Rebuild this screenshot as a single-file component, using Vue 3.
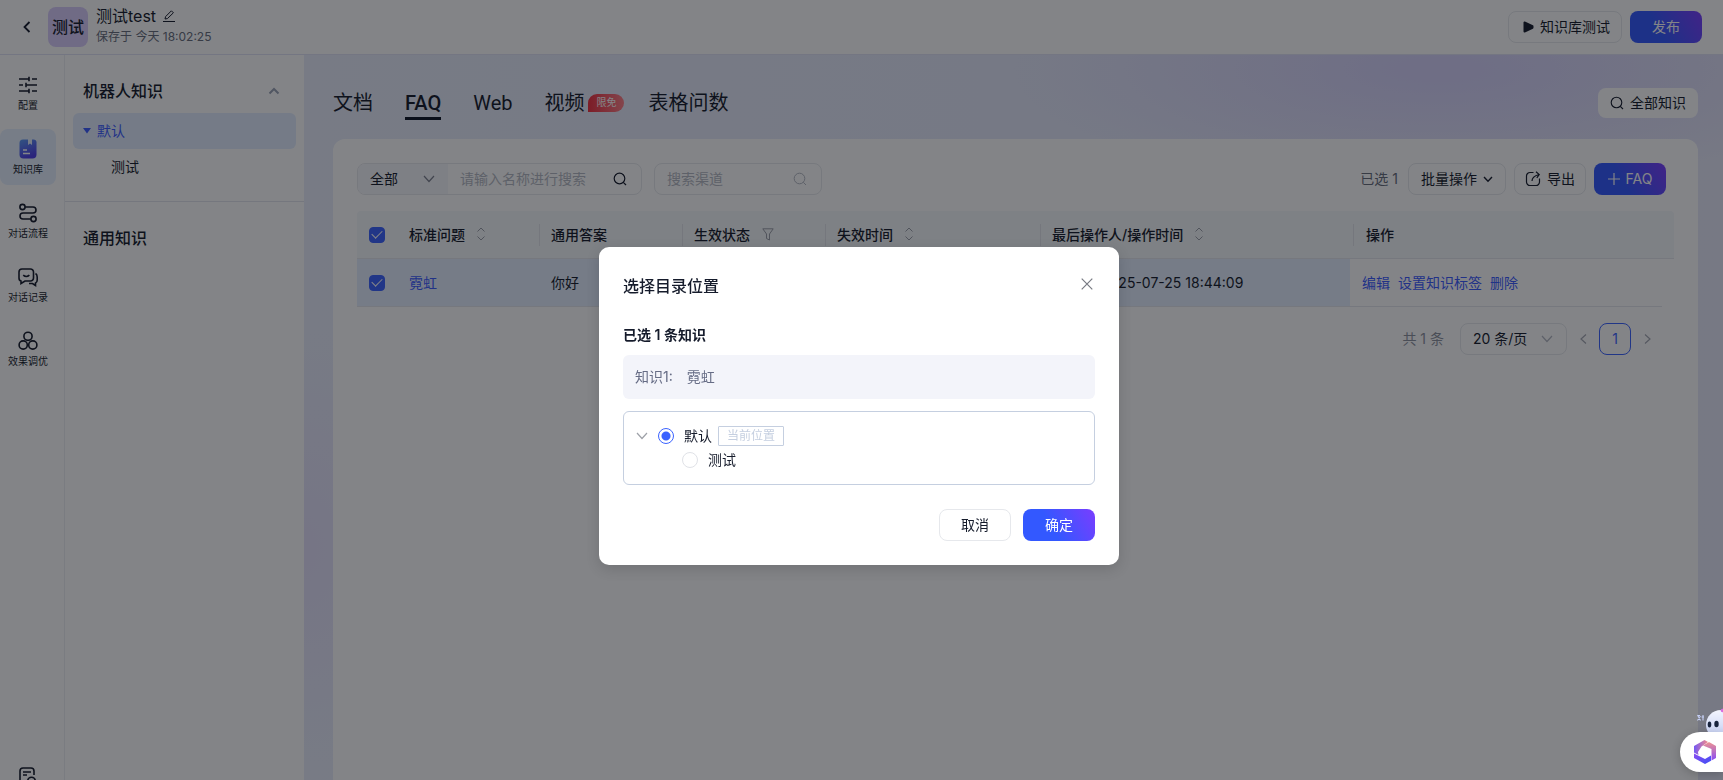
<script setup>
import { ref } from 'vue'

const navItems = [
  { id: 'config', label: '配置' },
  { id: 'library', label: '知识库' },
  { id: 'flow', label: '对话流程' },
  { id: 'chat', label: '对话记录' },
  { id: 'tune', label: '效果调优' },
]
const tabs = [
  { name: '文档' },
  { name: 'FAQ' },
  { name: 'Web' },
  { name: '视频', badge: '限免' },
  { name: '表格问数' },
]
const activeTab = ref('FAQ')
const allChecked = ref(true)
const rowChecked = ref(true)
const target = ref('default')
const keyword = ref('')
const channel = ref('')
</script>

<template>
  <div class="app">
    <header class="topbar">
      <button class="plain back" aria-label="返回">
        <svg width="8" height="12" viewBox="0 0 8 12"><path d="M6.5 1 L1.5 6 L6.5 11" fill="none" stroke="currentColor" stroke-width="1.8" /></svg>
      </button>
      <div class="avatar">测试</div>
      <div class="bot">
        <div class="bot-name">
          <span>测试test</span>
          <button class="plain" aria-label="编辑名称">
            <svg width="12" height="12" viewBox="0 0 12 12" fill="none" stroke="currentColor"><path d="M2 9 L2.6 6.6 L8.4 .8 L10.4 2.8 L4.4 8.6 Z M0 11.5 H12" /></svg>
          </button>
        </div>
        <div class="bot-saved">保存于 今天 18:02:25</div>
      </div>
      <div class="top-actions">
        <button class="btn test-btn">
          <svg width="11" height="12" viewBox="0 0 11 12"><path d="M1.5 1.5 V10.5 L9.5 6.8 V5.2 Z" fill="currentColor" stroke="currentColor" stroke-width="2" stroke-linejoin="round" /></svg>
          知识库测试
        </button>
        <button class="btn primary publish">发布</button>
      </div>
    </header>

    <div class="body">
      <nav class="rail">
        <a v-for="item in navItems" :key="item.id" href="#" class="rail-item" :class="{ active: item.id === 'library' }">
          <svg width="20" height="20" viewBox="0 0 20 20" fill="none" stroke="currentColor" stroke-width="1.6">
            <path v-if="item.id === 'config'" d="M1 4 H11 M14 4 H19 M11 1.8 V6.2 M1 10 H5 M8 10 H19 M8 7.8 V12.2 M1 16 H11 M14 16 H19 M11 13.8 V18.2" />
            <g v-else-if="item.id === 'library'" stroke="none">
              <defs>
                <linearGradient id="bookFill" x1="0" y1="0" x2="0.4" y2="1">
                  <stop offset="0" stop-color="#5c9df5" />
                  <stop offset="1" stop-color="#4f3fe8" />
                </linearGradient>
              </defs>
              <path d="M5 .5 H10 V6 L12 4.6 L14 6 V.5 H15 A3 3 0 0 1 18.500 4 V15.500 A4 4 0 0 1 14.500 19.500 H5.500 A4 4 0 0 1 1.500 15.500 V4 A3.500 3.500 0 0 1 5 .5Z" fill="url(#bookFill)" />
              <path d="M5 11 H9 M5 14.500 H12" stroke="#fff" stroke-width="1.500" />
            </g>
            <g v-else-if="item.id === 'flow'">
              <circle cx="4.500" cy="4" r="2.600" /><circle cx="15.500" cy="16" r="2.600" />
              <path d="M7.200 4 H15 A3 3 0 0 1 15 10 H5 A3 3 0 0 0 5 16 H12.800" />
            </g>
            <g v-else-if="item.id === 'chat'">
              <path d="M4 2 H12.500 A3 3 0 0 1 15.500 5 V11 A3 3 0 0 1 12.500 14 H7 L3 16.500 V14 A3 3 0 0 1 1 11 V5 A3 3 0 0 1 4 2Z" />
              <path d="M5.200 8.200 Q8.300 10.800 11.400 8.200 M17.500 6.500 Q19.200 7.500 19.200 10 V13 Q19.200 15.500 17.500 16 V18.500 L14.500 16.500 H11" />
            </g>
            <g v-else>
              <circle cx="10" cy="5.300" r="4.100" /><circle cx="5.200" cy="14" r="4.100" /><circle cx="14.800" cy="14" r="4.100" />
            </g>
          </svg>
          <span>{{ item.label }}</span>
        </a>
        <a href="#" class="rail-item rail-last" aria-label="日志">
          <svg width="20" height="20" viewBox="0 0 20 20" fill="none" stroke="currentColor" stroke-width="1.600">
            <path d="M8 18 H5 A3 3 0 0 1 2 15 V4 A3 3 0 0 1 5 1 H13 A3 3 0 0 1 16 4 V8 M5 5 H13 M5 8 H9" /><circle cx="13.500" cy="14" r="3.800" />
          </svg>
        </a>
      </nav>

      <aside class="tree">
        <section class="tree-group">
          <h2 class="tree-title">
            机器人知识
            <button class="plain" aria-label="收起">
              <svg width="12" height="8" viewBox="0 0 12 8"><path d="M1.500 6.500 L6 2 L10.500 6.500" fill="none" stroke="#9aa3b5" stroke-width="2" /></svg>
            </button>
          </h2>
          <a href="#" class="tree-item selected">
            <svg width="8" height="6" viewBox="0 0 8 6"><path d="M0 0 H8 L4 5.500Z" fill="currentColor" /></svg>默认
          </a>
          <a href="#" class="tree-item child">测试</a>
        </section>
        <section class="tree-group second">
          <h2 class="tree-title">通用知识</h2>
        </section>
      </aside>

      <main class="content">
        <div class="tab-row">
          <div class="tabs" role="tablist">
            <button v-for="tab in tabs" :key="tab.name" class="plain tab" :class="{ on: tab.name === activeTab }" role="tab" :aria-selected="tab.name === activeTab" @click="activeTab = tab.name">
              <span class="tab-name">{{ tab.name }}</span>
              <span v-if="tab.badge" class="badge">{{ tab.badge }}</span>
            </button>
          </div>
          <button class="btn all-btn">
            <svg width="14" height="14" viewBox="0 0 14 14" fill="none" stroke="currentColor" stroke-width="1.100"><circle cx="6.500" cy="6.500" r="5.300" /><path d="M10.300 10.300 L13 13" /></svg>
            全部知识
          </button>
        </div>

        <div class="card">
          <div class="toolbar">
            <div class="search-group">
              <div class="select-wrap scope">
                <select aria-label="范围"><option>全部</option></select>
                <svg width="12" height="8" viewBox="0 0 12 8"><path d="M1 1 L6 6.500 L11 1" fill="none" stroke="#7c818e" stroke-width="1.200" /></svg>
              </div>
              <input v-model="keyword" aria-label="名称" placeholder="请输入名称进行搜索" />
              <button class="plain" aria-label="搜索">
                <svg width="14" height="14" viewBox="0 0 14 14" fill="none" stroke="currentColor" stroke-width="1.200"><circle cx="6.500" cy="6.500" r="5.300" /><path d="M10.300 10.300 L13 13" /></svg>
              </button>
            </div>
            <div class="channel">
              <input v-model="channel" aria-label="渠道" placeholder="搜索渠道" />
              <svg width="14" height="14" viewBox="0 0 14 14" fill="none" stroke="#b4b8c2"><circle cx="6.500" cy="6.500" r="5.300" /><path d="M10.300 10.300 L13 13" /></svg>
            </div>
            <span class="picked">已选 1</span>
            <button class="btn batch">批量操作
              <svg width="10" height="7" viewBox="0 0 10 7"><path d="M1 1 L5 5.200 L9 1" fill="none" stroke="currentColor" stroke-width="1.400" /></svg>
            </button>
            <button class="btn export">
              <svg width="16" height="16" viewBox="0 0 16 16" fill="none" stroke="currentColor" stroke-width="1.200"><path d="M8.500 1.500 H5 A3.500 3.500 0 0 0 1.500 5 V11 A3.500 3.500 0 0 0 5 14.500 H11 A3.500 3.500 0 0 0 14.500 11 V7.500 M7 10 Q7 5.500 14 3.500 M11 .8 L14.200 3.500 L11.800 6.800" /></svg>
              导出
            </button>
            <button class="btn primary faq-btn">
              <svg width="12" height="12" viewBox="0 0 12 12"><path d="M0 6 H12 M6 0 V12" stroke="currentColor" stroke-width="1.200" /></svg>
              FAQ
            </button>
          </div>

          <table class="grid">
            <colgroup>
              <col class="c-check" /><col class="c-q" /><col class="c-a" /><col class="c-a" /><col class="c-exp" /><col /><col class="c-op" /><col class="c-gutter" />
            </colgroup>
            <thead>
              <tr>
                <th><input v-model="allChecked" type="checkbox" aria-label="全选" /></th>
                <th>标准问题<svg class="sort" width="8" height="14" viewBox="0 0 8 14"><path d="M.5 4.500 L4 1 L7.500 4.500 M.5 9.500 L4 13 L7.500 9.500" /></svg></th>
                <th class="sep">通用答案</th>
                <th class="sep">生效状态<svg class="sort" width="12" height="13" viewBox="0 0 12 13"><path d="M.8 .8 H11.200 L7.500 6 V12 L4.500 10.500 V6Z" /></svg></th>
                <th class="sep">失效时间<svg class="sort" width="8" height="14" viewBox="0 0 8 14"><path d="M.5 4.500 L4 1 L7.500 4.500 M.5 9.500 L4 13 L7.500 9.500" /></svg></th>
                <th class="sep">最后操作人/操作时间<svg class="sort" width="8" height="14" viewBox="0 0 8 14"><path d="M.5 4.500 L4 1 L7.500 4.500 M.5 9.500 L4 13 L7.500 9.500" /></svg></th>
                <th class="sep op">操作</th>
                <th></th>
              </tr>
            </thead>
            <tbody>
              <tr>
                <td><input v-model="rowChecked" type="checkbox" aria-label="选择 霓虹" /></td>
                <td><a href="#">霓虹</a></td>
                <td>你好</td>
                <td></td>
                <td></td>
                <td><span class="operator">管理员</span>2025-07-25 18:44:09</td>
                <td class="ops"><a href="#">编辑</a><a href="#">设置知识标签</a><a href="#">删除</a></td>
                <td class="gutter"></td>
              </tr>
            </tbody>
          </table>

          <div class="pager">
            <span class="total">共 1 条</span>
            <div class="select-wrap size">
              <select aria-label="每页条数"><option>20 条/页</option></select>
              <svg width="12" height="8" viewBox="0 0 12 8"><path d="M1 1 L6 6.500 L11 1" fill="none" stroke="#b4b8c2" stroke-width="1.200" /></svg>
            </div>
            <button class="plain step" aria-label="上一页"><svg width="7" height="10" viewBox="0 0 7 10"><path d="M6 .5 L1 5 L6 9.500" /></svg></button>
            <button class="btn page">1</button>
            <button class="plain step" aria-label="下一页"><svg width="7" height="10" viewBox="0 0 7 10"><path d="M1 .5 L6 5 L1 9.500" /></svg></button>
          </div>
        </div>
      </main>
    </div>

    <div class="mask">
      <div class="modal" role="dialog" aria-modal="true" aria-labelledby="dlg-title">
        <div class="modal-head">
          <h1 id="dlg-title">选择目录位置</h1>
          <button class="plain close" aria-label="关闭">
            <svg width="12" height="12" viewBox="0 0 12 12"><path d="M.7 .7 L11.300 11.300 M11.300 .7 L.7 11.300" stroke="#777a82" stroke-width="1.200" /></svg>
          </button>
        </div>
        <h3>已选 1 条知识</h3>
        <div class="picked-box"><span>知识1:</span><span>霓虹</span></div>
        <div class="dir-tree">
          <div class="dir-row">
            <svg width="12" height="8" viewBox="0 0 12 8"><path d="M1 1 L6 6.500 L11 1" fill="none" stroke="#9ea1a8" stroke-width="1.200" /></svg>
            <label><input v-model="target" type="radio" name="dir" value="default" />默认</label>
            <span class="tag">当前位置</span>
          </div>
          <div class="dir-row nested">
            <label><input v-model="target" type="radio" name="dir" value="test" />测试</label>
          </div>
        </div>
        <div class="modal-foot">
          <button class="btn">取消</button>
          <button class="btn primary">确定</button>
        </div>
      </div>
    </div>

    <div class="assistant">
      <svg class="robot" width="28" height="24" viewBox="0 0 28 24">
        <defs>
          <linearGradient id="robotHead" x1="0" y1="0" x2="0" y2="1">
            <stop offset="0" stop-color="#f4f6ff" /><stop offset="1" stop-color="#ccd5f5" />
          </linearGradient>
        </defs>
        <path d="M2.500 7 L5.500 12.500 M2.500 12.500 L5.500 8 M2.500 7.500 H5 M8 7 V12.500 M6.500 9 H9" stroke="#c5cff5" stroke-width="1.100" />
        <path d="M28 2 C18 1 11 8 11 17 C11 20 12 22 13 24 H28Z" fill="url(#robotHead)" />
        <ellipse cx="14.500" cy="16.500" rx="1.800" ry="3" fill="#17233d" /><ellipse cx="21.500" cy="16" rx="2.200" ry="3.300" fill="#17233d" />
        <circle cx="27.500" cy="2.500" r="1.800" fill="#d86be0" />
      </svg>
      <button class="plain pill" aria-label="智能助手">
        <svg width="24" height="26" viewBox="0 0 24 26">
          <defs>
            <linearGradient id="hexA" x1="0" y1="0" x2="1" y2="0"><stop offset="0" stop-color="#7358f5" /><stop offset="1" stop-color="#f58a8a" /></linearGradient>
            <linearGradient id="hexB" x1="0" y1="0" x2="0" y2="1"><stop offset="0" stop-color="#f79a86" /><stop offset="1" stop-color="#8a4bf5" /></linearGradient>
            <linearGradient id="hexC" x1="0" y1="0" x2="1" y2="1"><stop offset="0" stop-color="#8d4df2" /><stop offset="1" stop-color="#3d4ff5" /></linearGradient>
          </defs>
          <path d="M1 7 L11.500 1 L15 3 L8.500 7.500 L5 13 L5.500 16 L1 13.500Z" fill="url(#hexA)" />
          <path d="M12.500 1 L23 7 V19 L18.500 21.500 V10 L10 6.500 L16 3Z" fill="url(#hexB)" />
          <path d="M1 14.500 L12 20 L18 16.500 V21.800 L12 25 L1 19Z" fill="url(#hexC)" />
        </svg>
      </button>
    </div>
  </div>
</template>

<style>
html,
body {
  height: 100%;
  overflow: hidden;
}
#app {
  height: 100%;
}
</style>

<style scoped>
.app {
  height: 100%;
  display: flex;
  flex-direction: column;
  background: #fff;
  color: #151b2b;
  font-family: Inter, "Noto Sans CJK SC", sans-serif;
  font-size: 14px;
  line-height: 20px;
}
.app * {
  box-sizing: border-box;
}
svg {
  display: block;
  flex: none;
}
button,
input,
select {
  font: inherit;
  color: inherit;
}
h1,
h2,
h3 {
  margin: 0;
  font-weight: 500;
}
a {
  color: #3b5bff;
  text-decoration: none;
}
.plain {
  border: 0;
  padding: 0;
  background: none;
}
.btn {
  height: 32px;
  display: flex;
  align-items: center;
  justify-content: center;
  gap: 6px;
  border: 1px solid #e6e8ec;
  border-radius: 8px;
  background: #fff;
  padding: 0 12px;
  white-space: nowrap;
}
.primary {
  border: 0;
  color: #fff;
  background: linear-gradient(60deg, #3358ff 40%, #7a3dff);
}
.topbar {
  height: 55px;
  flex: none;
  display: flex;
  align-items: center;
  border-bottom: 1px solid #e0e3f5;
  padding: 0 21px 0 24px;
}
.back {
  width: 24px;
}
.back svg {
  margin-left: 7px;
}
.avatar {
  width: 40px;
  height: 40px;
  display: grid;
  place-items: center;
  border-radius: 8px;
  background: #d9ccfb;
  font-size: 16px;
  font-weight: 500;
}
.topbar .back {
  margin-left: -8px;
  margin-right: 8px;
}
.bot {
  margin-left: 8px;
}
.bot-name {
  display: flex;
  align-items: center;
  gap: 7px;
  font-size: 16px;
}
.bot-saved {
  font-size: 12px;
  line-height: 22px;
  color: #666c7b;
}
.top-actions {
  margin-left: auto;
  display: flex;
  gap: 8px;
}
.test-btn {
  width: 114px;
  padding: 0 11px 0 14px;
}
.publish {
  width: 72px;
}
.body {
  flex: 1;
  min-height: 0;
  display: flex;
}
.rail {
  width: 65px;
  flex: none;
  display: flex;
  flex-direction: column;
  gap: 8px;
  padding-top: 10px;
  border-right: 1px solid #eceef3;
  overflow: hidden;
}
.rail-item {
  width: 56px;
  height: 56px;
  flex: none;
  display: flex;
  flex-direction: column;
  align-items: center;
  padding-top: 10px;
  border-radius: 8px;
  color: #151b2b;
  font-size: 10px;
}
.rail-item.active {
  background: #e6f0ff;
}
.rail-last {
  margin-top: auto;
  margin-bottom: -33px;
}
.tree {
  width: 239px;
  flex: none;
}
.tree-group {
  padding: 24px 8px 16px;
}
.tree-group.second {
  border-top: 1px solid #e2e5ec;
}
.tree-title {
  display: flex;
  align-items: center;
  justify-content: space-between;
  height: 24px;
  margin-bottom: 10px;
  padding: 0 16px 0 10px;
  font-size: 16px;
}
.tree-item {
  display: flex;
  align-items: center;
  gap: 6px;
  height: 36px;
  padding-left: 10px;
  border-radius: 6px;
  color: #151b2b;
}
.tree-item.selected {
  background: #e2edff;
  color: #3b5bff;
}
.tree-item.child {
  padding-left: 38px;
}
.content {
  flex: 1;
  min-width: 0;
  display: flex;
  flex-direction: column;
  padding: 24px 25px 0 29px;
  background:
    radial-gradient(ellipse 30% 16% at 80% 2%, #d6d3fa 10%, rgba(214, 211, 250, 0) 100%),
    radial-gradient(ellipse 10% 30% at 0 68%, #e4e0fb 0, rgba(228, 224, 251, 0) 100%),
    linear-gradient(90deg, #e8edfb, #e4e8fa 60%, #e6e8f8);
}
.tab-row {
  display: flex;
  align-items: center;
  justify-content: space-between;
  height: 48px;
  margin-bottom: 12px;
}
.tabs {
  display: flex;
  gap: 32px;
  font-family: Roboto, "Noto Sans CJK SC", sans-serif;
  font-size: 20px;
}
.tab {
  display: flex;
  align-items: center;
  gap: 4px;
}
.tab-name {
  line-height: 28px;
  padding-top: 3px;
  border-bottom: 3px solid transparent;
  white-space: nowrap;
}
.tab.on .tab-name {
  font-weight: 500;
  border-color: #0d1424;
}
.badge {
  height: 18px;
  margin-right: -8px;
  padding: 0 8px;
  border-radius: 9px 9px 9px 0;
  background: linear-gradient(90deg, #f02f3e, #ff8088);
  color: #fff;
  font-size: 10px;
  line-height: 18px;
}
.all-btn {
  height: 30px;
  width: 100px;
  border: 0;
}
.card {
  flex: 1;
  border-radius: 12px 12px 0 0;
  background: #fff;
  padding: 24px;
}
.toolbar {
  display: flex;
  align-items: center;
  gap: 8px;
  padding-right: 8px;
}
.search-group,
.channel {
  height: 32px;
  display: flex;
  align-items: center;
  border: 1px solid #e6e8ec;
  border-radius: 8px;
  overflow: hidden;
  padding-right: 14px;
}
.search-group {
  width: 285px;
}
.channel {
  width: 168px;
  margin-left: 4px;
}
.search-group input,
.channel input {
  flex: 1;
  min-width: 0;
  border: 0;
  padding: 0 12px;
  background: none;
}
input::placeholder {
  color: #b4b8c2;
  opacity: 1;
}
.select-wrap {
  display: grid;
  align-items: center;
}
.select-wrap > * {
  grid-area: 1 / 1;
}
.select-wrap svg {
  justify-self: end;
  margin-right: 13px;
}
.select-wrap select {
  width: 100%;
  height: 30px;
  appearance: none;
  border: 0;
  background: none;
  padding: 0 12px;
}
.scope {
  width: 90px;
  background: #f5f6fa;
}
.picked {
  margin-left: auto;
  margin-right: 2px;
  color: #666c7b;
}
.batch {
  width: 98px;
}
.export,
.faq-btn {
  width: 72px;
}
.grid {
  width: 100%;
  margin-top: 16px;
  table-layout: fixed;
  border-collapse: separate;
  border-spacing: 0;
}
.c-check {
  width: 40px;
}
.c-q {
  width: 142px;
}
.c-a {
  width: 143px;
}
.c-exp {
  width: 215px;
}
.c-op {
  width: 312px;
}
.c-gutter {
  width: 12px;
}
th,
td {
  height: 48px;
  padding: 0 12px;
  text-align: left;
  border-bottom: 1px solid #e4e7ed;
  white-space: nowrap;
}
th {
  position: relative;
  background: #f5f8fa;
  font-weight: 500;
}
th:first-child {
  border-top-left-radius: 4px;
}
th:last-child {
  border-top-right-radius: 4px;
}
th:last-child,
td.gutter {
  padding: 0;
}
th.sep::before {
  content: "";
  position: absolute;
  left: 0;
  top: 13px;
  width: 1px;
  height: 22px;
  background: #e2e5ea;
}
th.op {
  padding-left: 16px;
}
th.op::before {
  left: 3px;
}
td {
  background: #e4eefe;
}
td.ops,
td.gutter {
  background: #fff;
}
td.gutter {
  border-bottom: 0;
}
.ops a {
  margin-right: 8px;
}
.sort {
  display: inline-block;
  vertical-align: -1px;
  margin-left: 12px;
  fill: none;
  stroke: #9a9ea8;
}
.operator {
  display: inline-block;
  width: 49px;
}
input[type="checkbox"],
input[type="radio"] {
  appearance: none;
  display: block;
  width: 16px;
  height: 16px;
  margin: 0;
}
input[type="checkbox"] {
  display: grid;
  place-items: center;
  border: 1px solid #cfd4de;
  border-radius: 4px;
}
input[type="checkbox"]:checked {
  border-color: #3b63ff;
  background: #3b63ff;
}
input[type="checkbox"]:checked::after {
  content: "";
  width: 9px;
  height: 5px;
  margin-bottom: 3px;
  border: solid #fff;
  border-width: 0 0 1px 1px;
  transform: rotate(-45deg);
}
.pager {
  display: flex;
  align-items: center;
  justify-content: flex-end;
  margin-top: 16px;
  padding-right: 15px;
  gap: 4px;
}
.total {
  margin-right: 12px;
  color: #8d929e;
}
.size {
  width: 107px;
  border: 1px solid #e6e8ec;
  border-radius: 8px;
}
.step {
  width: 24px;
  height: 32px;
  display: grid;
  place-items: center;
}
.step path {
  fill: none;
  stroke: #a4a8b2;
  stroke-width: 1.2px;
}
.page {
  width: 32px;
  padding: 0;
  border-color: #3b63ff;
  color: #3b63ff;
}
.mask {
  position: fixed;
  inset: 0;
  display: flex;
  justify-content: center;
  align-items: flex-start;
  padding: 247px 5px 0 0;
  background: rgba(8, 10, 16, 0.5);
}
.modal {
  width: 520px;
  padding: 24px;
  border-radius: 10px;
  background: #fff;
  box-shadow: 0 4px 14px rgba(0, 0, 0, 0.14);
}
.modal-head {
  display: flex;
  justify-content: space-between;
  height: 48px;
}
.modal-head h1 {
  font-size: 16px;
  line-height: 30px;
}
.close {
  width: 16px;
  height: 26px;
  display: grid;
  place-items: center;
}
.modal h3 {
  font-size: 14px;
  font-weight: 600;
  line-height: 32px;
}
.picked-box {
  display: flex;
  gap: 14px;
  margin-top: 4px;
  padding: 12px;
  border-radius: 6px;
  background: #f3f4fa;
  color: #666c85;
}
.dir-tree {
  margin-top: 12px;
  padding: 12px;
  border: 1px solid #c5cfe0;
  border-radius: 6px;
}
.dir-row {
  display: flex;
  align-items: center;
  height: 24px;
}
.dir-row label {
  display: flex;
  align-items: center;
  gap: 10px;
  margin-left: 10px;
}
.dir-row.nested {
  padding-left: 36px;
}
input[type="radio"] {
  border: 1px solid #e0e2e7;
  border-radius: 50%;
}
input[type="radio"]:checked {
  border-color: #3b63ff;
  background: radial-gradient(circle, #3b63ff 4px, #fff 5px);
}
.tag {
  margin-left: 6px;
  padding: 0 8px;
  border: 1px solid #c5cfe0;
  border-radius: 1px;
  color: #c5cfe0;
  font-size: 12px;
  line-height: 18px;
}
.modal-foot {
  display: flex;
  justify-content: flex-end;
  gap: 12px;
  margin-top: 24px;
}
.modal-foot .btn {
  width: 72px;
}
.assistant {
  position: fixed;
  right: 0;
  bottom: 8px;
  display: flex;
  flex-direction: column;
  align-items: flex-end;
}
.pill {
  width: 43px;
  height: 40px;
  display: flex;
  align-items: center;
  padding-left: 13px;
  border-radius: 20px 0 0 20px;
  background: #fff;
  box-shadow: 0 2px 10px rgba(0, 0, 0, 0.2);
}
</style>
